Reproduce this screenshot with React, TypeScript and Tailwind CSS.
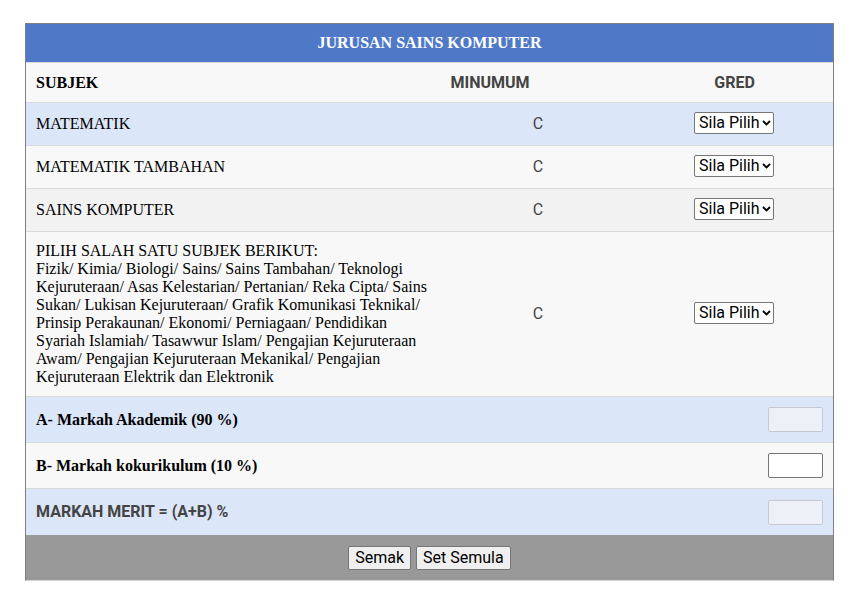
import React, { useState } from 'react';

const grades = ['Sila Pilih', 'A+', 'A', 'A-', 'B+', 'B', 'C+', 'C', 'D', 'E', 'G'];

const serif = "font-['Liberation_Serif',serif]";
const sans = "font-['Roboto',sans-serif]";

// Subjects in the form
const subjects = [
  { id: 'mt', name: 'MATEMATIK', bg: 'bg-[#dce6f9]', h: 'h-[43px]' },
  { id: 'mtt', name: 'MATEMATIK TAMBAHAN', bg: 'bg-[#f8f8f8]', h: 'h-[43px]' },
  { id: 'sk', name: 'SAINS KOMPUTER', bg: 'bg-[#f2f2f2]', h: 'h-[43px]' },
];

const GradeSelect: React.FC<{ value: string; onChange: (v: string) => void }> = ({ value, onChange }) => (
  <div className="relative w-[80px] h-[22px] -ml-[1px] -mt-[2px]">
    <select
      value={value}
      onChange={(e) => onChange(e.target.value)}
      className={`${sans} block appearance-none h-[22px] w-[80px] border border-[#767676] bg-white text-[16px] leading-none text-black rounded-[2px] pl-[4px] pr-[12px]`}
    >
      {grades.map((g) => (
        <option key={g} value={g}>{g}</option>
      ))}
    </select>
    <svg
      className="absolute right-[3px] top-[8px] pointer-events-none"
      width="9"
      height="6"
      viewBox="0 0 9 6"
    >
      <path d="M1 1l3.5 3.5L8 1" fill="none" stroke="#000" strokeWidth="1.8" />
    </svg>
  </div>
);

export default function App() {
  const [picked, setPicked] = useState<Record<string, string>>({});
  const [koku, setKoku] = useState('');

  const setGrade = (id: string) => (v: string) => setPicked((p) => ({ ...p, [id]: v }));

  return (
    <div className="bg-white w-[861px] h-[592px] pt-[23px]">
      <div className="ml-[25px] w-[809px] border-x border-t border-[#808080] border-b border-b-[#d4d4d4]">
        <div className={`${serif} bg-[#4f79c6] h-[39px] flex items-center justify-center text-white font-bold text-[16px] border-b border-[#d9d9d9]`}>
          JURUSAN SAINS KOMPUTER
        </div>

        <div className="bg-[#f8f8f8] h-[40px] flex items-center border-b border-[#d9d9d9]">
          <div className={`${serif} w-[318px] pl-[10px] font-bold text-[16px] text-black`}>SUBJEK</div>
          <div className={`${sans} w-[292px] text-center font-bold text-[16px] text-[#444]`}>MINUMUM</div>
          <div className={`${sans} flex-1 text-center font-bold text-[16px] text-[#444]`}>GRED</div>
        </div>

        {subjects.map((s) => (
          <div key={s.id} className={`${s.bg} ${s.h} flex items-center border-b border-[#d9d9d9]`}>
            <div className={`${serif} w-[414px] pl-[10px] text-[16px] text-black`}>{s.name}</div>
            <div className={`${sans} w-[196px] text-center text-[16px] text-[#444]`}>C</div>
            <div className="flex-1 flex justify-center">
              <GradeSelect value={picked[s.id] ?? 'Sila Pilih'} onChange={setGrade(s.id)} />
            </div>
          </div>
        ))}

        <div className="bg-[#f8f8f8] h-[165px] flex items-center border-b border-[#d9d9d9]">
          <div className={`${serif} w-[414px] pl-[10px] pr-[8px] text-[16px] leading-[18px] text-black`}>
            PILIH SALAH SATU SUBJEK BERIKUT:<br />
            Fizik/ Kimia/ Biologi/ Sains/ Sains Tambahan/ Teknologi Kejuruteraan/ Asas Kelestarian/ Pertanian/ Reka Cipta/ Sains Sukan/ Lukisan Kejuruteraan/ Grafik Komunikasi Teknikal/ Prinsip Perakaunan/ Ekonomi/ Perniagaan/ Pendidikan Syariah Islamiah/ Tasawwur Islam/ Pengajian Kejuruteraan Awam/ Pengajian Kejuruteraan Mekanikal/ Pengajian Kejuruteraan Elektrik dan Elektronik
          </div>
          <div className={`${sans} w-[196px] text-center text-[16px] text-[#444]`}>C</div>
          <div className="flex-1 flex justify-center">
            <GradeSelect value={picked.pilih ?? 'Sila Pilih'} onChange={setGrade('pilih')} />
          </div>
        </div>

        <div className="bg-[#dce6f9] h-[46px] flex items-center justify-between border-b border-[#d9d9d9] pl-[10px] pr-[10px]">
          <span className={`${serif} font-bold text-[16px] text-black`}>A- Markah Akademik (90 %)</span>
          <input disabled className="w-[55px] h-[25px] bg-[#eef0f7] border border-[#c8c8d0] rounded-[2px]" />
        </div>

        <div className="bg-[#f8f8f8] h-[46px] flex items-center justify-between border-b border-[#d9d9d9] pl-[10px] pr-[10px]">
          <span className={`${serif} font-bold text-[16px] text-black`}>B- Markah kokurikulum (10 %)</span>
          <input
            value={koku}
            onChange={(e) => setKoku(e.target.value)}
            className="w-[55px] h-[25px] bg-white border border-[#767676] rounded-[2px]"
          />
        </div>

        <div className="bg-[#dce6f9] h-[46px] flex items-center justify-between pl-[10px] pr-[10px]">
          <span className={`${sans} font-bold text-[16px] text-[#444]`}>MARKAH MERIT = (A+B) %</span>
          <input disabled className="w-[55px] h-[25px] bg-[#eef0f7] border border-[#c8c8d0] rounded-[2px]" />
        </div>

        <div className="bg-[#999999] h-[45px] flex items-center justify-center gap-[5px]">
          <button className={`${sans} h-[24px] px-[6px] bg-[#efefef] border border-[#767676] rounded-[2px] text-[16px] leading-none text-black`}>
            Semak
          </button>
          <button
            onClick={() => { setPicked({}); setKoku(''); }}
            className={`${sans} h-[24px] px-[6px] bg-[#efefef] border border-[#767676] rounded-[2px] text-[16px] leading-none text-black`}
          >
            Set Semula
          </button>
        </div>
      </div>
    </div>
  );
}
